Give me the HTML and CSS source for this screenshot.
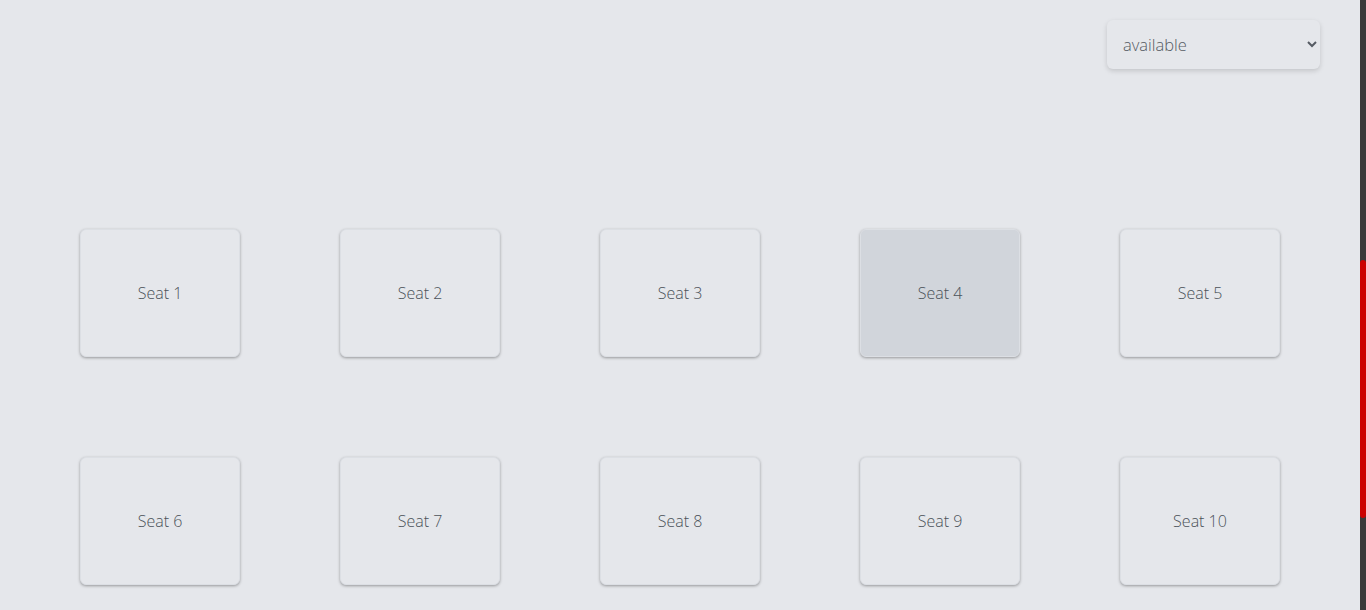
FILE: index.html
```html
<!DOCTYPE html>
<html>
<head>
<meta charset="utf-8">
<link rel="stylesheet" href="styles.css">
</head>
<body>
<div class="page">
  <div class="toolbar">
    <select class="filter">
      <option>available</option>
      <option>booked</option>
    </select>
  </div>
  <div class="seats">
    <div class="seat">Seat 1</div>
    <div class="seat">Seat 2</div>
    <div class="seat">Seat 3</div>
    <div class="seat selected">Seat 4</div>
    <div class="seat">Seat 5</div>
    <div class="seat">Seat 6</div>
    <div class="seat">Seat 7</div>
    <div class="seat">Seat 8</div>
    <div class="seat">Seat 9</div>
    <div class="seat">Seat 10</div>
  </div>
</div>
<div class="scrollbar"><div class="thumb"></div></div>
</body>
</html>
```
FILE: styles.css
```css
html, body {
  margin: 0;
  height: 100%;
  overflow: hidden;
  background: #e5e7eb;
}
body {
  font-family: "Open Sans", "Liberation Sans", sans-serif;
  font-weight: 300;
  color: #4b5563;
}
.page {
  width: 1360px;
}
.toolbar {
  display: flex;
  justify-content: flex-end;
  padding: 20px 40px 0 0;
  height: 109px;
  box-sizing: border-box;
}
.filter {
  width: 213px;
  height: 49px;
  padding: 0 8px 0 12px;
  border: none;
  border-radius: 6px;
  background: #e5e7eb;
  box-shadow: 0 2px 5px rgba(0, 0, 0, 0.15);
  font-family: "Open Sans", "Liberation Sans", sans-serif;
  font-weight: 300;
  font-size: 16.5px;
  color: #555b63;
  outline: none;
}
.seats {
  display: flex;
  flex-wrap: wrap;
  padding: 0 30px;
  margin-top: 70px;
}
.seat {
  width: 160px;
  height: 128px;
  margin: 50px;
  box-sizing: border-box;
  display: flex;
  align-items: center;
  justify-content: center;
  border: 1px solid #dcdfe4;
  border-radius: 6px;
  background: #e5e7eb;
  box-shadow: 0 1px 3px rgba(0, 0, 0, 0.35);
  font-size: 16px;
  color: #4b5259;
}
.seat.selected {
  background: #d1d5db;
}
.scrollbar {
  position: fixed;
  top: 0;
  right: 0;
  width: 6px;
  height: 100%;
  background: #3a3a3a;
}
.thumb {
  position: absolute;
  top: 260px;
  left: 0;
  width: 6px;
  height: 258px;
  border-radius: 3px;
  background: #cc0000;
}
```
